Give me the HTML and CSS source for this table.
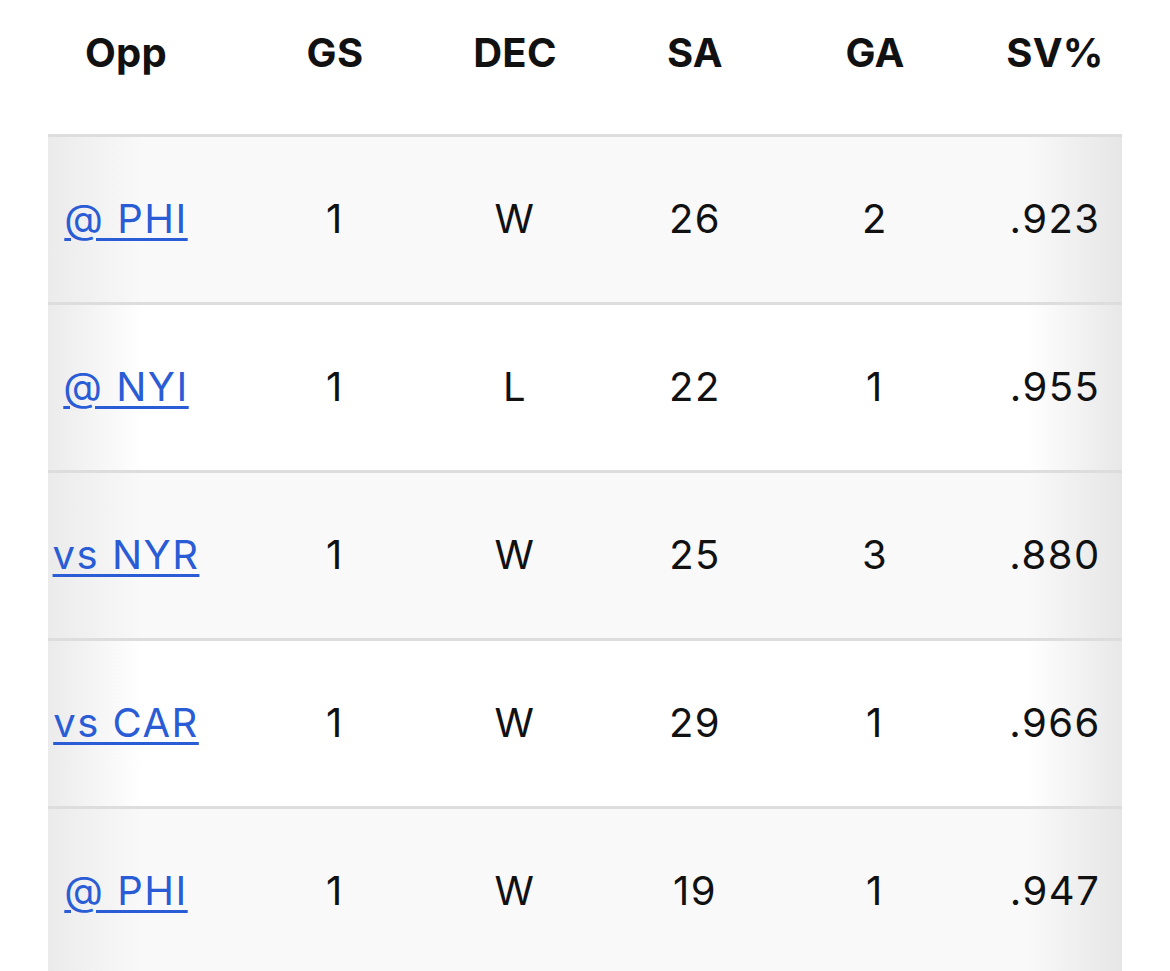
FILE: index.html
```html
<!DOCTYPE html>
<html lang="en">
<head>
<meta charset="utf-8">
<title>Game Log</title>
<link rel="stylesheet" href="styles.css">
</head>
<body>
<div class="table">
  <div class="row head">
    <div class="c c1">Opp</div>
    <div class="c c2">GS</div>
    <div class="c">DEC</div>
    <div class="c">SA</div>
    <div class="c">GA</div>
    <div class="c c6">SV%</div>
  </div>
  <div class="row body odd">
    <div class="c c1"><a href="#">@ PHI</a></div>
    <div class="c c2">1</div>
    <div class="c">W</div>
    <div class="c">26</div>
    <div class="c">2</div>
    <div class="c c6">.923</div>
  </div>
  <div class="row body even">
    <div class="c c1"><a href="#">@ NYI</a></div>
    <div class="c c2">1</div>
    <div class="c">L</div>
    <div class="c">22</div>
    <div class="c">1</div>
    <div class="c c6">.955</div>
  </div>
  <div class="row body odd">
    <div class="c c1"><a href="#">vs NYR</a></div>
    <div class="c c2">1</div>
    <div class="c">W</div>
    <div class="c">25</div>
    <div class="c">3</div>
    <div class="c c6">.880</div>
  </div>
  <div class="row body even">
    <div class="c c1"><a href="#">vs CAR</a></div>
    <div class="c c2">1</div>
    <div class="c">W</div>
    <div class="c">29</div>
    <div class="c">1</div>
    <div class="c c6">.966</div>
  </div>
  <div class="row body odd">
    <div class="c c1"><a href="#">@ PHI</a></div>
    <div class="c c2">1</div>
    <div class="c">W</div>
    <div class="c">19</div>
    <div class="c">1</div>
    <div class="c c6">.947</div>
  </div>
</div>
</body>
</html>
```
FILE: styles.css
```css
html, body {
  margin: 0;
  padding: 0;
  background: #ffffff;
  height: 971px;
  overflow: hidden;
}
body {
  font-family: Inter, "Noto Sans", "Liberation Sans", sans-serif;
  color: #111111;
}
.table {
  margin-left: 48px;
  width: 1074px;
}
.row {
  display: grid;
  grid-template-columns: 156px 221px 180px 180px 180px 157px;
  align-items: center;
}
.c {
  text-align: center;
  white-space: nowrap;
}
.c2 {
  padding-left: 41px;
}
.c6 {
  padding-left: 23px;
}
.head {
  height: 134px;
  align-items: start;
  font-weight: 700;
  font-size: 40px;
  line-height: 48px;
  padding-top: 29px;
  box-sizing: border-box;
  letter-spacing: 0.3px;
}
.body {
  height: 168px;
  box-sizing: border-box;
  border-top: 3px solid #dddddd;
  font-size: 40px;
  line-height: 48px;
  letter-spacing: 1.5px;
  padding-bottom: 2px;
}
.odd {
  background-color: #f9f9f9;
  background-image:
    linear-gradient(to right, #ebebeb 0px, rgba(249,249,249,0) 95px),
    linear-gradient(to left, #e6e6e6 0px, rgba(249,249,249,0) 95px);
}
.even {
  background-color: #ffffff;
  background-image:
    linear-gradient(to right, #ebebeb 0px, rgba(255,255,255,0) 95px),
    linear-gradient(to left, #e8e8e8 0px, rgba(255,255,255,0) 95px);
}
.body a {
  color: #2a5cd6;
  text-decoration: underline;
  text-decoration-thickness: 3px;
  text-underline-offset: 5px;
}
```
